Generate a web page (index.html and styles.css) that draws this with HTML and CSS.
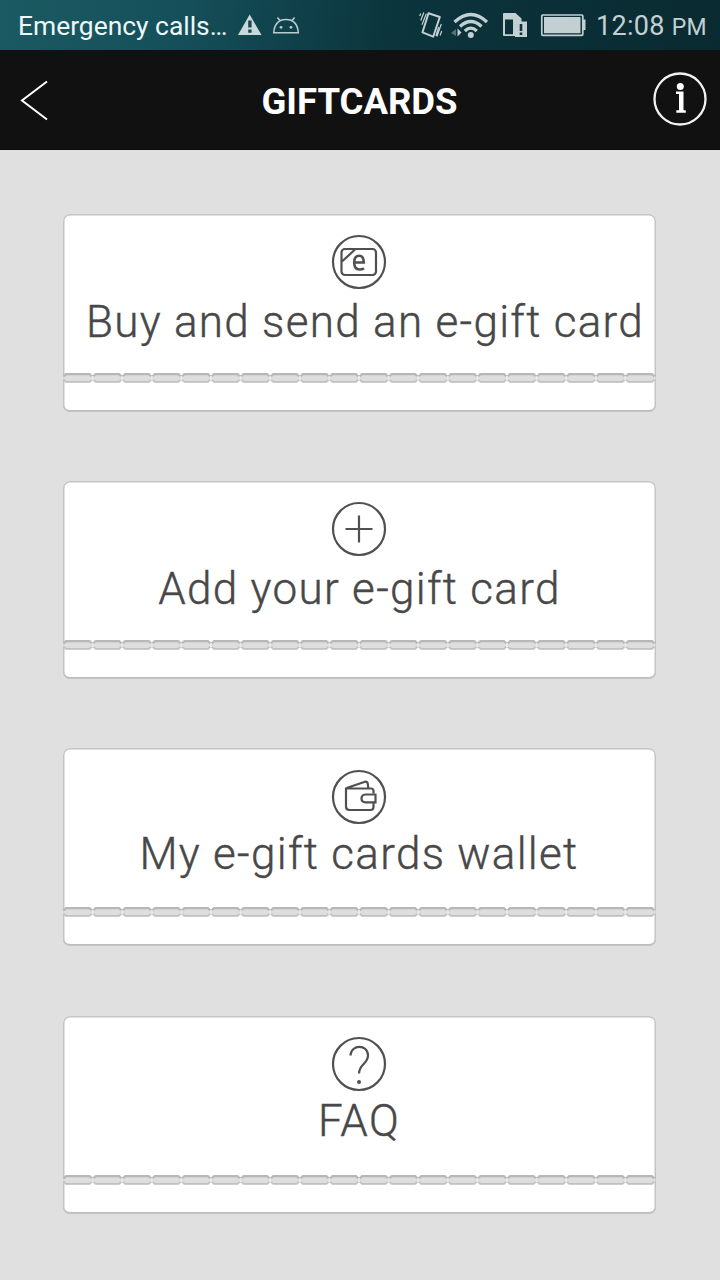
FILE: index.html
```html
<!DOCTYPE html>
<html lang="en">
<head>
<meta charset="utf-8">
<title>Giftcards</title>
<link rel="stylesheet" href="styles.css">
</head>
<body>
<div class="status">
  <span class="carrier">Emergency calls…</span>
  <svg class="status-left" width="64" height="50" viewBox="236 0 64 50">
    <path d="M249.700 14.500L261.500 35H238Z" fill="#c9d9dc"/>
    <path d="M248.200 20.500h3.400v7h-3.400zM248.200 29.500h3.400v3.300h-3.400z" fill="#174a52"/>
    <g fill="none" stroke="#b9cdd0" stroke-width="1.500"><path d="M273.700 32.700C274.500 23 280 19.500 286 19.500S297.600 23 298.300 32.700Z"/><path d="M280 20.500l-2.600-3M292 20.500l2.600-3"/></g>
    <g fill="#b9cdd0"><circle cx="281" cy="27.300" r="1.400"/><circle cx="291" cy="27.300" r="1.400"/></g>
  </svg>
  <svg class="status-right" width="172" height="50" viewBox="416 0 172 50">
    <g fill="none" stroke="#c3d0d3">
      <path d="M428.500 13.200L439.800 17L433.200 36.700L422.500 32.300Z" stroke-width="2" stroke-linejoin="round"/>
      <path d="M423.800 12.500l-3 8M426.300 13.800l-4.300 11M420.600 13.500l-.8 2.500M441.300 24l-4.400 12.500M438.700 27l-2.800 9M441.700 31l-1.600 4.500" stroke-width="1.200"/>
      <path d="M454.500 22q16.500-15 32.500 0M460 26.500q11-10 21.500 0M464.800 31q6-5.800 12 0" stroke-width="3.200"/>
    </g>
    <circle cx="470.800" cy="35" r="3" fill="#c3d0d3"/>
    <path d="M457.500 28.500v8l4-4z" fill="#c3d0d3"/><path d="M456 29v7l-5-3z" fill="#54727a"/>
    <path fill-rule="evenodd" d="M503 14q0-1 1-1h11.500l6 5.500V22H515V36H504q-1 0-1-1ZM505 19.500V34.200H513V19.500Z" fill="#c3d0d3"/>
    <path d="M515 21.500h12V37h-12z" fill="#c3d0d3"/>
    <path d="M519.700 24h2.600v7h-2.600zM519.700 32.500h2.600v2.600h-2.600z" fill="#0c323a"/>
    <rect x="541.800" y="15" width="41" height="20.300" rx="1" fill="none" stroke="#c3d0d3" stroke-width="1.700"/>
    <path d="M544 17h36.500v16.300H544zM583 19.500h2.500v10.500H583z" fill="#c3d0d3"/>
  </svg>
  <span class="clock">12:08 <small>PM</small></span>
</div>
<header class="bar">
  <svg class="back" width="50" height="50" viewBox="0 0 50 50"><path d="M47 6.500L22 25.500L47 44.500" fill="none" stroke="#fff" stroke-width="2"/></svg>
  <h1 class="title">GIFTCARDS</h1>
  <svg class="info" width="56" height="56" viewBox="0 0 56 56"><circle cx="28" cy="28" r="25.500" fill="none" stroke="#f2f2f2" stroke-width="2.300"/><circle cx="28.300" cy="15.500" r="3.500" fill="#fff"/><path d="M24 20.500h7.500V39.300h2.300v2.500H24.300v-2.500h2.700V23H24Z" fill="#fff"/></svg>
</header>
<main class="cards">
  <section class="card">
    <svg class="icon" width="56" height="56" viewBox="0 0 56 56"><circle class="ln" cx="28" cy="28" r="26"/><rect class="ln" x="10.500" y="15" width="34.500" height="26" rx="3.500"/><path class="ln" d="M11 27.500L24 15.500"/><path class="glyph-e" d="M23.500 28.500H32.800Q32.600 21.800 28.300 21.800Q23.200 21.800 23.200 28.500Q23.200 35.500 28.500 35.500Q31.300 35.500 33 34.200"/></svg>
    <span class="label buy">Buy and send an e-gift card</span>
    <svg class="perf" width="593" height="12" viewBox="0 0 593 12"><use href="#tear"/></svg>
  </section>
  <section class="card">
    <svg class="icon" width="56" height="56" viewBox="0 0 56 56"><circle class="ln" cx="28" cy="28" r="26"/><path class="ln" d="M14.500 28H41.500M28 14.500V41.500"/></svg>
    <span class="label add">Add your e-gift card</span>
    <svg class="perf" width="593" height="12" viewBox="0 0 593 12"><use href="#tear"/></svg>
  </section>
  <section class="card">
    <svg class="icon" width="56" height="56" viewBox="0 0 56 56"><circle class="ln" cx="28" cy="28" r="26"/><path class="ln" d="M42.500 24.500V22Q42.500 19.500 40 19.500H15V37.500Q15 41 18.500 41H39.500Q42.500 41 42.500 38V34M15.500 19L34 12.800Q36.500 12.300 36.800 15L37.300 19"/><path class="ln" d="M44.500 25.500H34.500Q30.500 25.800 30.500 29.500T34.500 33.300H44.500Z"/></svg>
    <span class="label wallet">My e-gift cards wallet</span>
    <svg class="perf" width="593" height="12" viewBox="0 0 593 12"><use href="#tear"/></svg>
  </section>
  <section class="card">
    <svg class="icon" width="56" height="56" viewBox="0 0 56 56"><circle class="ln" cx="28" cy="28" r="26"/><path class="ln" d="M19.500 19.500C20 8 37 8 37 19.500C37 28 28 28 28 37.500"/><circle cx="28" cy="46" r="2" fill="#505050"/></svg>
    <span class="label faq">FAQ</span>
    <svg class="perf" width="593" height="12" viewBox="0 0 593 12">
      <defs>
        <pattern id="slots" width="29.600" height="12" patternUnits="userSpaceOnUse">
          <path d="M0 6L3 1.500H26.600L29.600 6L26.600 10.500H3Z" fill="#dedede"/>
          <path d="M.6 4.400L3 2.200H26.600L29 4.400" fill="none" stroke="#b7b7b7" stroke-width="2.200"/>
          <path d="M.6 7.600L3 9.900H26.600L29 7.600" fill="none" stroke="#c1c1c1" stroke-width="1.900"/>
        </pattern>
        <rect id="tear" width="593" height="12" fill="url(#slots)"/>
      </defs>
      <use href="#tear"/>
    </svg>
  </section>
</main>
</body>
</html>
```
FILE: styles.css
```css
* { box-sizing: border-box; }
body { margin: 0; width: 720px; height: 1280px; overflow: hidden; background: #e0e0e0; font-family: Roboto, "Liberation Sans", sans-serif; }
.status { display: flex; height: 50px; padding: 0 13px 0 18px; line-height: 53px; background: linear-gradient(100deg, #1b5a62 0%, #15505a 25%, #0b343c 55%, #0a2a31 100%); }
.carrier { width: 218px; color: #eef7f8; font-size: 26.400px; line-height: 53px; white-space: nowrap; }
.status-left { flex: none; }
.status-right { flex: none; margin-left: auto; }
.clock { width: 119px; padding-left: 8px; color: #c3d0d3; font-size: 27px; letter-spacing: .3px; white-space: nowrap; }
.clock small { font-size: 23px; }
.bar { display: flex; align-items: center; justify-content: space-between; height: 100px; padding-right: 12px; background: #111; border-bottom: 1px solid #0a0a0a; }
.back { margin-right: 17px; }
.title { margin: 4px 0 0; color: #fff; font-size: 36.500px; font-weight: 700; line-height: 42px; }
.info { margin-bottom: 2px; }
.cards { display: flex; flex-direction: column; gap: 69.400px; padding: 63.500px 0 0 62.500px; }
.card { display: flex; flex-direction: column; align-items: center; width: 593px; height: 198px; flex: none; padding-top: 20.500px; background: #fff; border-radius: 7px; box-shadow: inset 0 0 0 1.500px #c4c4c4, inset 0 -2px 0 #b7b7b7; }
.icon { flex: none; }
.ln { fill: none; stroke: #505050; stroke-width: 2.200; }
.glyph-e { fill: none; stroke: #505050; stroke-width: 2.600; }
.label { height: 60px; margin-top: 2px; color: #484848; font-size: 44px; font-weight: 300; line-height: 60px; white-space: nowrap; letter-spacing: 1.300px; -webkit-text-stroke: .4px #484848; }
.buy { padding-left: 12px; }
.add { padding-left: 1px; }
.wallet, .faq { line-height: 54px; }
.perf { flex: none; margin-top: 19.500px; }
```
